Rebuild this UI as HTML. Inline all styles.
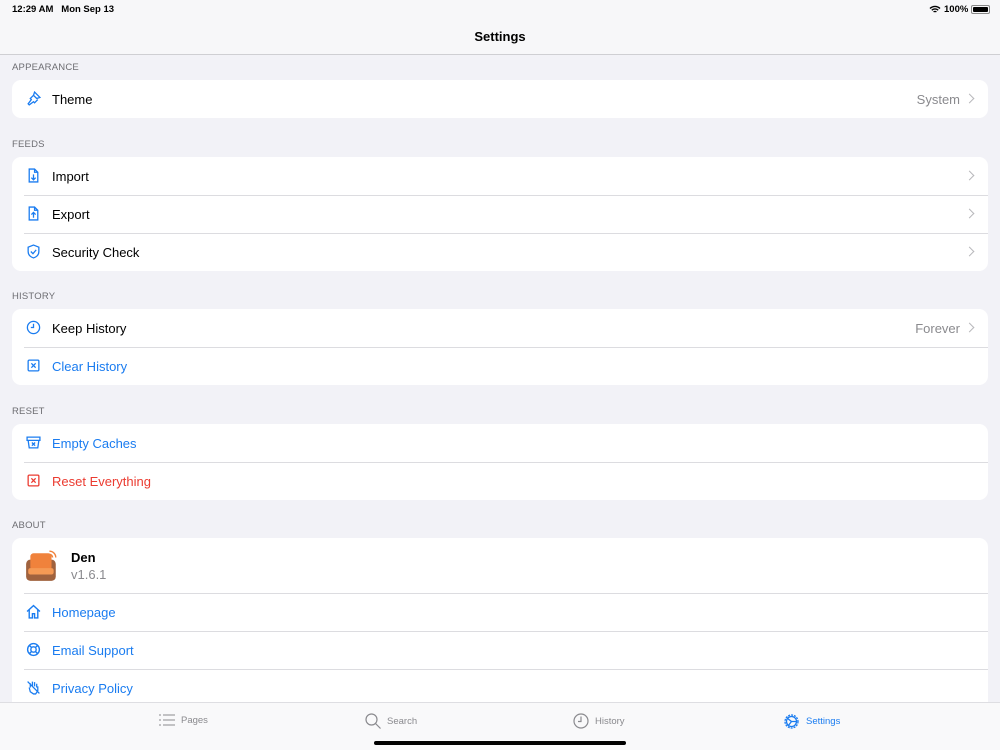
<!DOCTYPE html>
<html><head><meta charset="utf-8"><style>
*{margin:0;padding:0;box-sizing:border-box}
body{width:1000px;height:750px;overflow:hidden;background:#f2f2f7;font-family:"Liberation Sans",sans-serif;position:relative;color:#000}
.nav{position:absolute;left:0;top:0;width:1000px;height:55px;background:#f7f7f9;border-bottom:1px solid #cfcfd3}
.st{position:absolute;top:4px;font-size:9.5px;font-weight:bold}
.title{position:absolute;top:29px;width:100%;text-align:center;font-size:13px;font-weight:bold}
.h{position:absolute;left:12px;font-size:9.5px;color:#6d6d72;letter-spacing:.2px}
.card{position:absolute;left:12px;width:976px;background:#fff;border-radius:9px;overflow:hidden}
.row{position:relative;height:38px;display:flex;align-items:center}
.row+.row:before{content:"";position:absolute;left:12px;right:0;top:0;border-top:1px solid #dcdce0}
.ic{position:absolute;left:14px;top:11px;width:15px;height:15px}
.lb{position:absolute;left:40px;font-size:13px}
.blue{color:#1a7cf0}.red{color:#eb3b30}
.val{position:absolute;right:28px;font-size:13px;color:#8a8a8e}
.ch{position:absolute;right:15px;top:15px;width:7px;height:7px;border-right:1.5px solid #b8b8bc;border-top:1.5px solid #b8b8bc;transform:rotate(45deg)}
.tab{position:absolute;top:702px;left:0;width:1000px;height:48px;background:#f9f9fa;border-top:1px solid #dedee2}
.t{position:absolute;top:12px;font-size:9.5px;color:#8a8a8e;display:flex;align-items:center;gap:6px}
</style></head><body>
<div class="nav">
<div class="st" style="left:12px">12:29 AM&nbsp;&nbsp; Mon Sep 13</div>
<div class="st" style="left:929px;display:flex;align-items:center;gap:3px"><svg width="12" height="9" viewBox="0 0 12 9"><path d="M1 3.5a7 7 0 0 1 10 0M2.8 5.3a4.5 4.5 0 0 1 6.4 0M4.6 7a2 2 0 0 1 2.8 0" stroke="#000" stroke-width="1.4" fill="none"/></svg>100%<span style="display:inline-block;width:19px;height:9px;border:1px solid #888;border-radius:2px;padding:1px"><span style="display:block;height:100%;background:#000;border-radius:1px"></span></span></div>
<div class="title">Settings</div>
</div>

<div class="h" style="top:62px">APPEARANCE</div>
<div class="card" style="top:80px"><div class="row"><svg class="ic" viewBox="0 0 14 14" fill="none" stroke="#1a7cf0" stroke-width="1.2"><path d="M8 1l5 5-3 1-3-3zM7 4l-3 3 1 1-3 4 1 1 4-3 1 1 3-3"/></svg><span class="lb">Theme</span><span class="val">System</span><span class="ch"></span></div></div>

<div class="h" style="top:139px">FEEDS</div>
<div class="card" style="top:157px">
<div class="row"><svg class="ic" viewBox="0 0 14 14" fill="none" stroke="#1a7cf0" stroke-width="1.2"><path d="M3 1h5l3 3v9H3zM8 1v3h3M7 6v5M5 9l2 2 2-2"/></svg><span class="lb">Import</span><span class="ch"></span></div>
<div class="row"><svg class="ic" viewBox="0 0 14 14" fill="none" stroke="#1a7cf0" stroke-width="1.2"><path d="M3 1h5l3 3v9H3zM8 1v3h3M7 11V6M5 8l2-2 2 2"/></svg><span class="lb">Export</span><span class="ch"></span></div>
<div class="row"><svg class="ic" viewBox="0 0 14 14" fill="none" stroke="#1a7cf0" stroke-width="1.2"><path d="M7 1l5 2v4c0 3-2 5-5 6-3-1-5-3-5-6V3zM4.5 7l2 2 3-3.5"/></svg><span class="lb">Security Check</span><span class="ch"></span></div>
</div>

<div class="h" style="top:291px">HISTORY</div>
<div class="card" style="top:309px">
<div class="row"><svg class="ic" viewBox="0 0 14 14" fill="none" stroke="#1a7cf0" stroke-width="1.2"><circle cx="7" cy="7" r="5.7"/><path d="M7 3.5V7H4.5"/></svg><span class="lb">Keep History</span><span class="val">Forever</span><span class="ch"></span></div>
<div class="row"><svg class="ic" viewBox="0 0 14 14" fill="none" stroke="#1a7cf0" stroke-width="1.2"><rect x="2" y="2" width="10" height="10" rx="1"/><path d="M5 5l4 4M9 5l-4 4"/></svg><span class="lb blue">Clear History</span></div>
</div>

<div class="h" style="top:406px">RESET</div>
<div class="card" style="top:424px">
<div class="row"><svg class="ic" viewBox="0 0 14 14" fill="none" stroke="#1a7cf0" stroke-width="1.2"><path d="M1 2h12v3H1zM2 5l1 7h8l1-7M5.5 7l3 3M8.5 7l-3 3"/></svg><span class="lb blue">Empty Caches</span></div>
<div class="row"><svg class="ic" viewBox="0 0 14 14" fill="none" stroke="#eb3b30" stroke-width="1.2"><rect x="2" y="2" width="10" height="10" rx="1"/><path d="M5 5l4 4M9 5l-4 4"/></svg><span class="lb red">Reset Everything</span></div>
</div>

<div class="h" style="top:520px">ABOUT</div>
<div class="card" style="top:538px;height:200px">
<div class="row" style="height:55px"><svg style="position:absolute;left:12px;top:11px" width="36" height="34" viewBox="0 0 34 32"><rect x="2" y="10" width="28" height="20" rx="4" fill="#a0623e"/><rect x="6" y="4" width="20" height="16" rx="3" fill="#f0823c"/><rect x="4" y="18" width="24" height="6" rx="2" fill="#f59a55"/><path d="M24 2a6 6 0 0 1 6 6M24 5a3 3 0 0 1 3 3" stroke="#f0823c" stroke-width="1.3" fill="none"/></svg><span class="lb" style="left:59px;top:12px;font-weight:bold">Den</span><span class="lb" style="left:59px;top:29px;color:#8a8a8e">v1.6.1</span></div>
<div class="row"><svg class="ic" viewBox="0 0 14 14" fill="none" stroke="#1a7cf0" stroke-width="1.3"><path d="M1 7l6-5.5L13 7M3 5.5V13h3V9h2v4h3V5.5"/></svg><span class="lb blue">Homepage</span></div>
<div class="row"><svg class="ic" viewBox="0 0 14 14" fill="none" stroke="#1a7cf0" stroke-width="1.3"><circle cx="7" cy="7" r="5.5"/><circle cx="7" cy="7" r="2.5"/><path d="M3 3l2.3 2.3M11 3L8.7 5.3M3 11l2.3-2.3M11 11L8.7 8.7"/></svg><span class="lb blue">Email Support</span></div>
<div class="row"><svg class="ic" viewBox="0 0 14 14" fill="none" stroke="#1a7cf0" stroke-width="1.2"><path d="M4 7V3M6 6V1.5M8 6V2M10 7V3.5M3 7l1 4 3 2h2l2-3V6M1.5 1.5l11 11"/></svg><span class="lb blue">Privacy Policy</span></div>
</div>

<div class="tab">
<div class="t" style="left:159px;top:11px"><svg width="16" height="12" viewBox="0 0 16 12" stroke="#8a8a8e" stroke-width="1.1"><path d="M0 1h2M4 1h12M0 6h2M4 6h12M0 11h2M4 11h12"/></svg>Pages</div>
<div class="t" style="left:365px;top:10px"><svg width="16" height="16" viewBox="0 0 16 16" fill="none" stroke="#8a8a8e" stroke-width="1.2"><circle cx="6.5" cy="6.5" r="5.5"/><path d="M10.5 10.5l5 5"/></svg>Search</div>
<div class="t" style="left:573px;top:10px"><svg width="16" height="16" viewBox="0 0 16 16" fill="none" stroke="#8a8a8e" stroke-width="1.2"><circle cx="8" cy="8" r="7"/><path d="M8 3.5V8.5H5"/></svg>History</div>
<div class="t" style="left:783px;top:10px;color:#1a7cf0"><svg width="17" height="17" viewBox="0 0 17 17" fill="none" stroke="#1a7cf0" stroke-width="1.3"><circle cx="8.5" cy="8.5" r="6.5" stroke-dasharray="2 1"/><circle cx="8.5" cy="8.5" r="5"/><path d="M8.5 8.5L4 5M8.5 8.5L13 8.5M8.5 8.5L5 13"/></svg>Settings</div>
<div style="position:absolute;left:374px;top:38px;width:252px;height:4px;border-radius:2px;background:#000"></div>
</div>
</body></html>
